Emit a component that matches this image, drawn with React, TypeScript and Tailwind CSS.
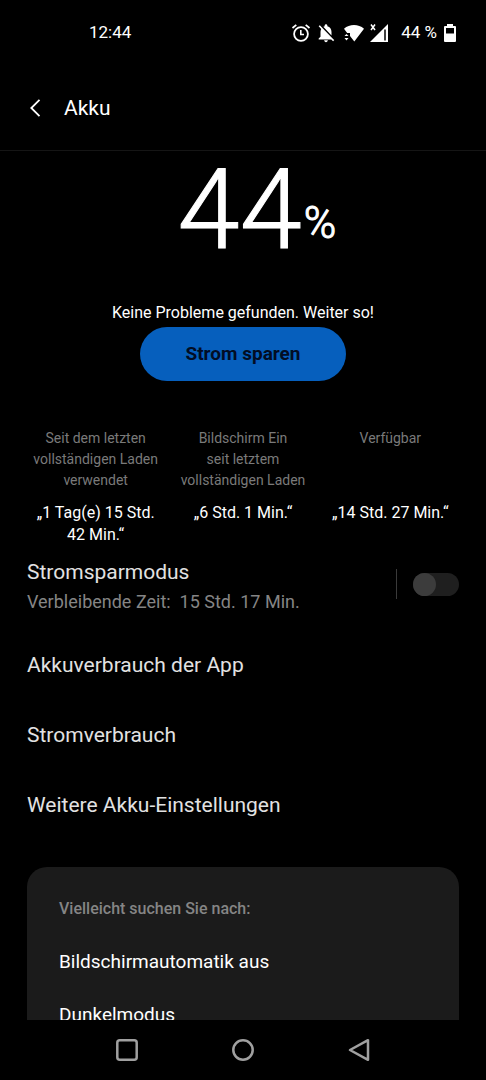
import { useState } from "react";
import { MdNotificationsOff } from "react-icons/md";

const stats = [
  {
    label: ["Seit dem letzten", "vollständigen Laden", "verwendet"],
    value: ["„1 Tag(e) 15 Std.", "42 Min.“"],
  },
  {
    label: ["Bildschirm Ein", "seit letztem", "vollständigen Laden"],
    value: ["„6 Std. 1 Min.“"],
  },
  { label: ["Verfügbar"], value: ["„14 Std. 27 Min.“"] },
];

const menuItems = [
  "Akkuverbrauch der App",
  "Stromverbrauch",
  "Weitere Akku-Einstellungen",
];

const suggestions = ["Bildschirmautomatik aus", "Dunkelmodus"];

function AlarmIcon() {
  return (
    <svg width="20" height="20" viewBox="0 0 20 20" fill="none" stroke="white" aria-hidden="true">
      <circle cx="10" cy="11" r="6.900" strokeWidth="1.800" />
      <path d="M1.500 5L5.300 1.900M18.500 5L14.700 1.900" strokeWidth="1.800" />
      <path d="M9.800 7V11.500H13" strokeWidth="1.600" />
    </svg>
  );
}

function WifiIcon() {
  return (
    <svg width="22" height="20" viewBox="0 0 22 20" aria-hidden="true">
      <path
        d="M1 5.800C6.500.8 15.500.8 21 5.800L11.300 18.500 7 13V10H4.200Z"
        fill="white"
      />
      <path d="M1.500 13L3.500 11 5.500 13ZM1.500 15H5.500L3.500 17.500Z" fill="white" />
    </svg>
  );
}

function SignalIcon() {
  return (
    <svg width="20" height="20" viewBox="0 0 20 20" aria-hidden="true">
      <path d="M19 1V19H1Z" fill="white" />
      <path d="M16 6.500V17.500" stroke="black" strokeWidth="1.500" />
      <path d="M2 1.500L6 7M6 1.500L2 7" stroke="white" strokeWidth="1.500" />
    </svg>
  );
}

function BatteryIcon() {
  return (
    <svg width="14" height="20" viewBox="0 0 14 20" aria-hidden="true">
      <path
        fillRule="evenodd"
        d="M4 1H10V3H12Q13 3 13 4V18Q13 19 12 19H2Q1 19 1 18V4Q1 3 2 3H4ZM3 5V10.500H11V5Z"
        fill="white"
      />
    </svg>
  );
}

function StatusBar() {
  return (
    <div className="flex h-16 shrink-0 items-center justify-between pt-0.5 pr-[29px] pl-[89px] text-[17px]">
      <span>12:44</span>
      <div className="flex items-center">
        <AlarmIcon />
        <MdNotificationsOff size={22} className="ml-1" aria-hidden="true" />
        <span className="ml-1.5">
          <WifiIcon />
        </span>
        <span className="ml-1">
          <SignalIcon />
        </span>
        <span className="ml-3">44 %</span>
        <span className="ml-1.5">
          <BatteryIcon />
        </span>
      </div>
    </div>
  );
}

function NavigationBar() {
  return (
    <nav className="flex h-15 shrink-0 items-center justify-center gap-23">
      <button type="button" aria-label="Letzte Apps">
        <svg width="24" height="24" viewBox="0 0 24 24" fill="none" stroke="#a0a0a0" strokeWidth="2.500">
          <rect x="2.300" y="2.300" width="19.400" height="19.400" rx="2.500" />
        </svg>
      </button>
      <button type="button" aria-label="Startseite">
        <svg width="24" height="24" viewBox="0 0 24 24" fill="none" stroke="#a0a0a0" strokeWidth="2.500">
          <circle cx="12" cy="12" r="9.700" />
        </svg>
      </button>
      <button type="button" aria-label="Zurück">
        <svg
          width="24"
          height="24"
          viewBox="0 0 24 24"
          fill="none"
          stroke="#a0a0a0"
          strokeWidth="2.500"
          strokeLinejoin="round"
        >
          <path d="M21 2.200V21.800L3 12Z" />
        </svg>
      </button>
    </nav>
  );
}

export default function App() {
  const [powerSaving, setPowerSaving] = useState(false);

  return (
    <div className="flex h-screen flex-col bg-black font-[Roboto,sans-serif] text-white">
      <StatusBar />

      {/* Header */}
      <header className="flex h-[87px] shrink-0 items-center gap-5 border-b border-[#151515] px-7 pt-0.5">
        <button type="button" aria-label="Zurück">
          <svg width="16" height="20" viewBox="0 0 16 20" fill="none" stroke="white" strokeWidth="1.800">
            <path d="M11.500 1.800L3.300 10 11.500 18.200" />
          </svg>
        </button>
        <h1 className="text-[21px] leading-7">Akku</h1>
      </header>

      <main className="min-h-0 flex-1 overflow-hidden pt-[3px]">
        {/* Battery level */}
        <section className="flex flex-col items-center">
          <p className="flex items-end pl-7 text-[112px] leading-28 font-light [-webkit-text-stroke:1px_white]">
            44
            <span className="mb-[21px] ml-0.5 text-[44px] leading-none">%</span>
          </p>
          <p className="mt-[33px] text-base leading-7">
            Keine Probleme gefunden. Weiter so!
          </p>
          <button
            type="button"
            className="h-[54px] rounded-full bg-[#065fbd] px-[45px] text-[19px] font-bold text-[#020d24]"
          >
            Strom sparen
          </button>
        </section>

        {/* Usage since last charge */}
        <dl className="mt-[47px] grid grid-cols-3 px-[22px] text-center">
          {stats.map((stat) => (
            <div key={stat.label[0]} className="flex flex-col">
              <dt className="h-[63px] text-sm leading-[21px] text-[#7a7a7a]">
                {stat.label.map((line) => (
                  <span key={line} className="block">
                    {line}
                  </span>
                ))}
              </dt>
              <dd className="mt-[11px] text-base leading-[22px]">
                {stat.value.map((line) => (
                  <span key={line} className="block">
                    {line}
                  </span>
                ))}
              </dd>
            </div>
          ))}
        </dl>

        {/* Power saving mode */}
        <div className="mt-3 flex items-start px-[27px]">
          <label htmlFor="power-saving" className="flex-1">
            <span className="block text-[21px] leading-7 text-[#e2e2e2]">
              Stromsparmodus
            </span>
            <span className="mt-1 block text-lg leading-6 whitespace-pre text-[#858585]">
              {"Verbleibende Zeit:  15 Std. 17 Min."}
            </span>
          </label>
          <div className="mt-[11px] flex items-center gap-4">
            <span className="h-[30px] w-px bg-[#3a3a3a]" />
            <input
              id="power-saving"
              type="checkbox"
              role="switch"
              checked={powerSaving}
              onChange={(e) => setPowerSaving(e.target.checked)}
              className="h-[23px] w-[46px] appearance-none rounded-full bg-[#1f1f1f] before:block before:size-[23px] before:rounded-full before:bg-[#3c3c3c] checked:bg-[#065fbd] checked:before:ml-auto"
            />
          </div>
        </div>

        <ul className="mt-[17px]">
          {menuItems.map((item) => (
            <li key={item}>
              <button
                type="button"
                className="h-[70px] w-full px-[27px] text-left text-[21px] text-[#e2e2e2]"
              >
                {item}
              </button>
            </li>
          ))}
        </ul>

        {/* Suggestions */}
        <section className="mx-[27px] mt-[26px] rounded-[20px] bg-[#1b1b1b] px-8 pt-[29px] pb-6">
          <h2 className="mb-[14px] text-base leading-[26px] font-medium text-[#858585]">
            Vielleicht suchen Sie nach:
          </h2>
          <ul>
            {suggestions.map((item) => (
              <li key={item}>
                <a href="#" className="flex h-[53px] items-center text-[19px]">
                  {item}
                </a>
              </li>
            ))}
          </ul>
        </section>
      </main>

      <NavigationBar />
    </div>
  );
}
